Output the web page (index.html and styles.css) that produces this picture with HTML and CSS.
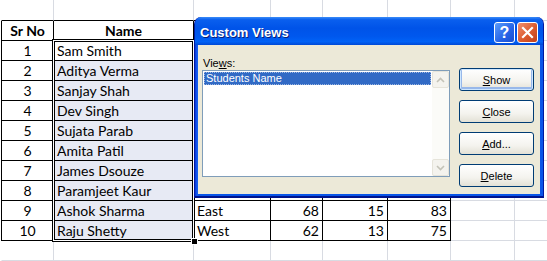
FILE: index.html
```html
<!DOCTYPE html>
<html lang="en">

<head>
    <meta charset="UTF-8">
    <title>Custom Views</title>
    <link rel="stylesheet" href="styles.css">
</head>

<body>
    <div class="sheet-wrap">
        <table class="sheet">
            <colgroup>
                <col style="width: 53px">
                <col style="width: 140px">
                <col style="width: 77px">
                <col style="width: 52px">
                <col style="width: 65px">
                <col style="width: 63px">
                <col style="width: 64px">
                <col style="width: 64px">
            </colgroup>
            <tr class="r0">
                <td class="above"></td><td class="above"></td><td class="above"></td><td class="above"></td><td class="above"></td><td class="above"></td><td></td><td></td>
            </tr>
            <tr>
                <td class="t first head">Sr No</td><td class="t head">Name</td><td class="t"></td><td class="t"></td><td class="t"></td><td class="t"></td><td></td><td></td>
            </tr>
            <tr>
                <td class="t first num">1</td><td class="t name active">Sam Smith</td><td class="t"></td><td class="t"></td><td class="t"></td><td class="t"></td><td></td><td></td>
            </tr>
            <tr>
                <td class="t first num">2</td><td class="t name sel">Aditya Verma</td><td class="t"></td><td class="t"></td><td class="t"></td><td class="t"></td><td></td><td></td>
            </tr>
            <tr>
                <td class="t first num">3</td><td class="t name sel">Sanjay Shah</td><td class="t"></td><td class="t"></td><td class="t"></td><td class="t"></td><td></td><td></td>
            </tr>
            <tr>
                <td class="t first num">4</td><td class="t name sel">Dev Singh</td><td class="t"></td><td class="t"></td><td class="t"></td><td class="t"></td><td></td><td></td>
            </tr>
            <tr>
                <td class="t first num">5</td><td class="t name sel">Sujata Parab</td><td class="t"></td><td class="t"></td><td class="t"></td><td class="t"></td><td></td><td></td>
            </tr>
            <tr>
                <td class="t first num">6</td><td class="t name sel">Amita Patil</td><td class="t"></td><td class="t"></td><td class="t"></td><td class="t"></td><td></td><td></td>
            </tr>
            <tr>
                <td class="t first num">7</td><td class="t name sel">James Dsouze</td><td class="t"></td><td class="t"></td><td class="t"></td><td class="t"></td><td></td><td></td>
            </tr>
            <tr>
                <td class="t first num">8</td><td class="t name sel">Paramjeet Kaur</td><td class="t"></td><td class="t"></td><td class="t"></td><td class="t"></td><td></td><td></td>
            </tr>
            <tr>
                <td class="t first num">9</td><td class="t name sel">Ashok Sharma</td><td class="t">East</td><td class="t val">68</td><td class="t val">15</td><td class="t val">83</td><td></td><td></td>
            </tr>
            <tr>
                <td class="t first num">10</td><td class="t name sel">Raju Shetty</td><td class="t">West</td><td class="t val">62</td><td class="t val">13</td><td class="t val">75</td><td></td><td></td>
            </tr>
            <tr>
                <td class="first"></td><td></td><td></td><td></td><td></td><td></td><td></td><td></td>
            </tr>
            <tr>
                <td class="first"></td><td></td><td></td><td></td><td></td><td></td><td></td><td></td>
            </tr>
        </table>

        <!-- selected range B2:B11 -->
        <div class="selection"></div>
        <div class="fill-handle"></div>

        <div class="dialog">
            <div class="titlebar">
                <span class="title">Custom Views</span>
                <div class="tb-buttons">
                    <span class="tb-btn help">?</span>
                    <span class="tb-btn close">
                        <svg width="13" height="13" viewBox="0 0 13 13">
                            <path d="M2 2 L11 11 M11 2 L2 11" stroke="#fff" stroke-width="2.2" stroke-linecap="square" fill="none"/>
                        </svg>
                    </span>
                </div>
            </div>
            <div class="client">
                <div class="views">
                    <div class="label">Vie<u>w</u>s:</div>
                    <div class="listbox">
                        <div class="items">
                            <div class="item selected">Students Name</div>
                        </div>
                        <div class="scrollbar">
                            <span class="arrow">
                                <svg width="9" height="6" viewBox="0 0 9 6"><path d="M1 5 L4.5 1.5 L8 5" stroke="#c4c3b8" stroke-width="1.6" fill="none"/></svg>
                            </span>
                            <span class="track"></span>
                            <span class="arrow">
                                <svg width="9" height="6" viewBox="0 0 9 6"><path d="M1 1 L4.5 4.5 L8 1" stroke="#c4c3b8" stroke-width="1.6" fill="none"/></svg>
                            </span>
                        </div>
                    </div>
                </div>
                <div class="buttons">
                    <button class="btn default"><u>S</u>how</button>
                    <button class="btn"><u>C</u>lose</button>
                    <button class="btn"><u>A</u>dd...</button>
                    <button class="btn"><u>D</u>elete</button>
                </div>
            </div>
        </div>
    </div>
</body>

</html>
```

FILE: styles.css
```css
body {
    margin: 0;
    background-color: #fff;
}

.sheet-wrap {
    position: relative;
    width: 547px;
    height: 261px;
    overflow: hidden;
}

/* worksheet grid */
.sheet {
    border-collapse: separate;
    border-spacing: 0;
    table-layout: fixed;
    width: 578px;
    margin-left: 1px;
    font-family: Lato, "Liberation Sans", sans-serif;
    font-size: 14px;
    color: #000;
}

.sheet tr {
    height: 20px;
}

.sheet tr.r0 {
    height: 21px;
}

.sheet td {
    padding: 0 3px;
    border-right: 1px solid #d8dbe2;
    border-bottom: 1px solid #d8dbe2;
    white-space: nowrap;
    overflow: hidden;
    vertical-align: bottom;
    line-height: 18px;
    box-sizing: border-box;
}

.sheet td:first-child {
    border-left: 1px solid #fff;
}

.sheet td.above {
    border-bottom-color: #000;
}

.sheet td.t {
    border-right-color: #000;
    border-bottom-color: #000;
}

.sheet td.t.first {
    border-left-color: #000;
}

.sheet td.head {
    font-weight: bold;
    text-align: center;
}

.sheet td.num {
    text-align: center;
}

.sheet td.val {
    text-align: right;
}

.sheet td.sel {
    background-color: #e7eaf4;
}

.selection {
    position: absolute;
    left: 52px;
    top: 39px;
    width: 143px;
    height: 203px;
    box-sizing: border-box;
    border: 1px solid #000;
    box-shadow: inset 0 0 0 1px #fff, inset 0 0 0 2px #000;
}

.fill-handle {
    position: absolute;
    left: 191px;
    top: 238px;
    width: 5px;
    height: 5px;
    background-color: #000;
    border: 1px solid #fff;
}

/* XP style dialog */
.dialog {
    position: absolute;
    left: 194px;
    top: 17px;
    width: 350px;
    height: 181px;
    box-sizing: border-box;
    background: linear-gradient(to right, #0831d9, #1660f0 2px, #0a55e8 4px);
    border: 1px solid #0019a0;
    border-top: none;
    border-bottom: 2px solid #00138c;
    border-radius: 7px 7px 0 0;
    display: flex;
    flex-direction: column;
    font-family: Tahoma, "Liberation Sans", sans-serif;
    font-size: 11px;
    color: #000;
}

.titlebar {
    height: 28px;
    flex: none;
    display: flex;
    align-items: center;
    justify-content: space-between;
    padding: 0 5px 0 5px;
    border-radius: 7px 7px 0 0;
    background: linear-gradient(#3b8cf8 0%, #0a5fee 10%, #0053e8 40%, #0058ee 70%, #0162f6 88%, #0049d6 100%);
}

.title {
    color: #fff;
    font-family: "Liberation Sans", sans-serif;
    font-weight: bold;
    font-size: 13px;
    text-shadow: 1px 1px 0 #0a1e78;
    margin-top: 2px;
}

.tb-buttons {
    display: flex;
    gap: 2px;
    margin-top: 3px;
}

.tb-btn {
    width: 19px;
    height: 19px;
    border: 1px solid #fff;
    border-radius: 3px;
    display: flex;
    align-items: center;
    justify-content: center;
    color: #fff;
    font-family: "Liberation Sans", sans-serif;
    font-weight: bold;
    font-size: 16px;
}

.tb-btn.help {
    background: linear-gradient(135deg, #5a9cfc, #2563e6 60%, #1b4fd0);
}

.tb-btn.close {
    background: linear-gradient(135deg, #f09070, #dc5a2e 55%, #c1401a);
}

.client {
    flex: 1;
    margin: 0 3px 2px 3px;
    background-color: #ece9d8;
    display: flex;
    padding: 12px 0 0 4px;
}

.views {
    display: flex;
    flex-direction: column;
}

.label {
    height: 13px;
    padding-left: 1px;
    line-height: 12px;
}

.listbox {
    width: 248px;
    height: 107px;
    box-sizing: border-box;
    border: 1px solid #7f9db9;
    background-color: #fff;
    display: flex;
}

.items {
    flex: 1;
    padding: 1px;
}

.item {
    height: 13px;
    line-height: 13px;
    padding-left: 2px;
}

.item.selected {
    background-color: #316ac5;
    color: #fff;
    outline: 1px dotted #9cb6e0;
    outline-offset: -1px;
}

.scrollbar {
    width: 17px;
    display: flex;
    flex-direction: column;
    background-color: #fbfbf8;
}

.arrow {
    height: 17px;
    box-sizing: border-box;
    border: 1px solid #e6e4da;
    border-radius: 2px;
    background-color: #f4f3ee;
    display: flex;
    align-items: center;
    justify-content: center;
}

.track {
    flex: 1;
}

.buttons {
    display: flex;
    flex-direction: column;
    gap: 9px;
    margin-left: 9px;
    padding-top: 11px;
}

.btn {
    width: 75px;
    height: 23px;
    padding: 0;
    box-sizing: border-box;
    border: 1px solid #003c74;
    border-radius: 3px;
    background: linear-gradient(#ffffff, #f4f3ee 60%, #e3e1d6);
    font-family: Tahoma, "Liberation Sans", sans-serif;
    font-size: 11px;
    color: #000;
}

.btn.default {
    box-shadow: inset 0 0 0 1px #cee7ff, inset 0 -1px 0 2px #98b8ea;
}
```
